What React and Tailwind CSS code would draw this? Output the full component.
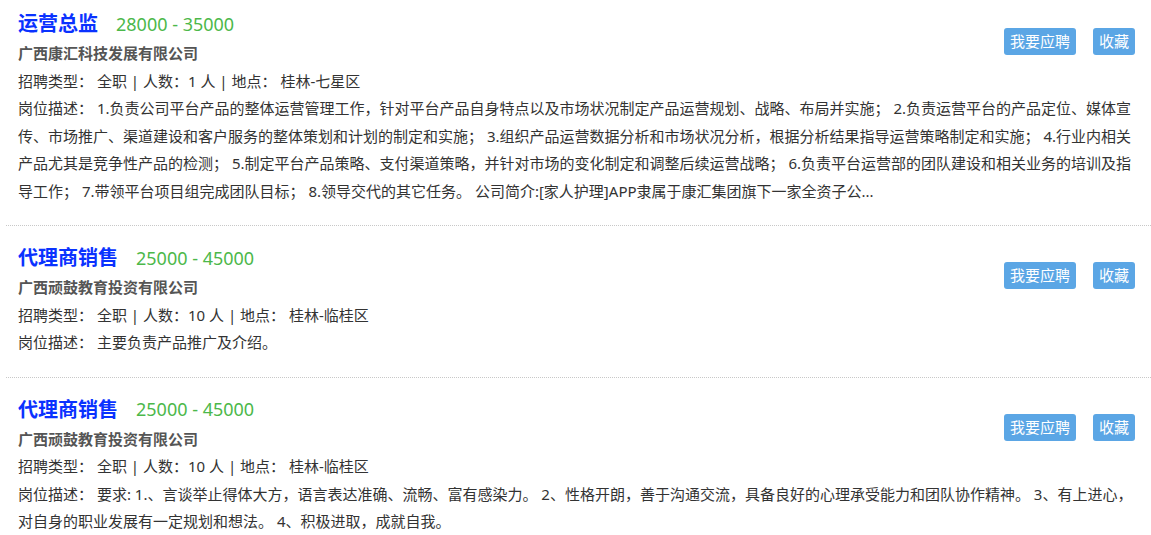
import React from "react";

const jobs = [
  {
    title: "运营总监",
    salary: "28000 - 35000",
    company: "广西康汇科技发展有限公司",
    people: "1",
    place: "桂林-七星区",
    desc: [
      "岗位描述： 1.负责公司平台产品的整体运营管理工作，针对平台产品自身特点以及市场状况制定产品运营规划、战略、布局并实施； 2.负责运营平台的产品定位、媒体宣",
      "传、市场推广、渠道建设和客户服务的整体策划和计划的制定和实施； 3.组织产品运营数据分析和市场状况分析，根据分析结果指导运营策略制定和实施； 4.行业内相关",
      "产品尤其是竞争性产品的检测； 5.制定平台产品策略、支付渠道策略，并针对市场的变化制定和调整后续运营战略； 6.负责平台运营部的团队建设和相关业务的培训及指",
      "导工作； 7.带领平台项目组完成团队目标； 8.领导交代的其它任务。 公司简介:[家人护理]APP隶属于康汇集团旗下一家全资子公...",
    ],
  },
  {
    title: "代理商销售",
    salary: "25000 - 45000",
    company: "广西顽鼓教育投资有限公司",
    people: "10",
    place: "桂林-临桂区",
    desc: ["岗位描述： 主要负责产品推广及介绍。"],
  },
  {
    title: "代理商销售",
    salary: "25000 - 45000",
    company: "广西顽鼓教育投资有限公司",
    people: "10",
    place: "桂林-临桂区",
    desc: [
      "岗位描述： 要求: 1.、言谈举止得体大方，语言表达准确、流畅、富有感染力。 2、性格开朗，善于沟通交流，具备良好的心理承受能力和团队协作精神。 3、有上进心，",
      "对自身的职业发展有一定规划和想法。 4、积极进取，成就自我。",
    ],
  },
];

function JobCard({ job, first }) {
  return (
    <div
      className={
        "ml-[6px] pl-[12px] pr-[16px] pb-[20px] border-b border-dotted border-[#c8c8c8] " +
        (first ? "pt-[8px]" : "pt-[16px]")
      }
    >
      <div className="flex justify-between items-start">
        <div>
          <div className="flex items-center h-[32px]">
            <span className="text-[20px] font-bold text-[#0a32ff]">{job.title}</span>
            <span className="ml-[18px] text-[18px] text-[#4cb84a]">{job.salary}</span>
          </div>
          <div className="font-bold text-[#555] leading-[27.5px]">{job.company}</div>
          <div className="leading-[27.5px]">
            招聘类型： 全职 | 人数：{job.people} 人 | 地点： {job.place}
          </div>
        </div>
        <div className="flex gap-[17px] mt-[20px]">
          <button className="h-[27px] px-[6px] rounded-[3px] bg-[#5ba6e5] text-white text-[15px] leading-[27px]">
            我要应聘
          </button>
          <button className="h-[27px] px-[6px] rounded-[3px] bg-[#5ba6e5] text-white text-[15px] leading-[27px]">
            收藏
          </button>
        </div>
      </div>
      <div className="leading-[27.5px]">
        {job.desc.map((line, i) => (
          <div key={i} className="whitespace-nowrap">
            {line}
          </div>
        ))}
      </div>
    </div>
  );
}

export default function App() {
  return (
    <div className="min-h-screen bg-white text-[15px] text-[#333] font-['Noto_Sans','Noto_Sans_CJK_SC',sans-serif]">
      {jobs.map((job, i) => (
        <JobCard key={i} job={job} first={i === 0} />
      ))}
    </div>
  );
}
